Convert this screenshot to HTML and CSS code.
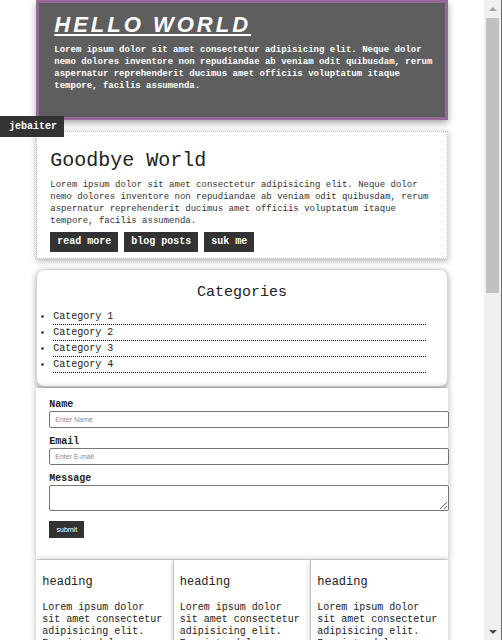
FILE: index.html
```html
<!DOCTYPE html>
<html>
<head>
<meta charset="utf-8">
<link rel="stylesheet" href="styles.css">
</head>
<body>
<div class="screen">
  <div class="viewport">
    <div class="tag">jebaiter</div>
    <div class="container">
      <header class="hero">
        <h1>HELLO WORLD</h1>
        <p>Lorem ipsum dolor sit amet consectetur adipisicing elit. Neque dolor nemo dolores inventore non repudiandae ab veniam odit quibusdam, rerum aspernatur reprehenderit ducimus amet officiis voluptatum itaque tempore, facilis assumenda.</p>
      </header>

      <section class="post">
        <h2>Goodbye World</h2>
        <p>Lorem ipsum dolor sit amet consectetur adipisicing elit. Neque dolor nemo dolores inventore non repudiandae ab veniam odit quibusdam, rerum aspernatur reprehenderit ducimus amet officiis voluptatum itaque tempore, facilis assumenda.</p>
        <div class="btns">
          <a class="btn">read more</a>
          <a class="btn">blog posts</a>
          <a class="btn">suk me</a>
        </div>
      </section>

      <section class="cats">
        <h3>Categories</h3>
        <ul>
          <li>Category 1</li>
          <li>Category 2</li>
          <li>Category 3</li>
          <li>Category 4</li>
        </ul>
      </section>

      <section class="form-box">
        <form>
          <label>Name</label>
          <input type="text" placeholder="Enter Name">
          <label>Email</label>
          <input type="text" placeholder="Enter E-mail">
          <label>Message</label>
          <textarea></textarea>
          <button type="button" class="submit">submit</button>
        </form>
      </section>

      <div class="cols">
        <div class="col">
          <h4>heading</h4>
          <p>Lorem ipsum dolor sit amet consectetur adipisicing elit. Eveniet, dolorum.</p>
        </div>
        <div class="col">
          <h4>heading</h4>
          <p>Lorem ipsum dolor sit amet consectetur adipisicing elit. Eveniet, dolorum.</p>
        </div>
        <div class="col">
          <h4>heading</h4>
          <p>Lorem ipsum dolor sit amet consectetur adipisicing elit. Eveniet, dolorum.</p>
        </div>
      </div>
    </div>
  </div>
  <div class="scrollbar">
    <div class="arrow up"></div>
    <div class="track"><div class="thumb"></div></div>
    <div class="arrow down"></div>
  </div>
  <div class="rim"></div>
</div>
</body>
</html>
```

FILE: styles.css
```css
html, body {
  margin: 0;
  padding: 0;
  height: 640px;
  overflow: hidden;
  background: #fff;
}

.screen {
  display: flex;
  width: 502px;
  height: 640px;
}

.viewport {
  position: relative;
  flex: 1;
  height: 640px;
  overflow: hidden;
  font-family: "Liberation Mono", "Courier New", monospace;
  color: #333;
}

.tag {
  position: absolute;
  left: 0;
  top: 116px;
  z-index: 5;
  background: #333;
  color: #fff;
  font-weight: bold;
  font-size: 10px;
  line-height: 21px;
  padding: 0 7px 0 9px;
}

.container {
  width: 85%;
  margin: 0 auto;
}

/* hero */
.hero {
  box-sizing: border-box;
  height: 120px;
  background: #5e5e5e;
  border: 3px solid #97699b;
  padding: 9px 8px 0 15px;
  box-shadow: 0 3px 7px rgba(0,0,0,0.35);
  color: #fff;
}

.hero h1 {
  margin: 0;
  font-family: "Liberation Sans", Arial, sans-serif;
  font-style: italic;
  font-weight: bold;
  font-size: 22px;
  line-height: 26px;
  letter-spacing: 3px;
  text-decoration: underline;
  text-decoration-thickness: 2px;
  text-underline-offset: 2px;
}

.hero p {
  margin: 6px 0 0;
  font-size: 9px;
  line-height: 12px;
  font-weight: bold;
}

/* post card */
.post {
  margin-top: 11px;
  border: 1px dotted #b9b9b9;
  padding: 16px 13px 6px 13px;
  box-shadow: 0 2px 6px rgba(0,0,0,0.3);
  background: #fff;
}

.post h2 {
  margin: 0;
  font-weight: normal;
  font-size: 20px;
  line-height: 26px;
  color: #222;
}

.post p {
  margin: 5px 0 0;
  font-size: 9px;
  line-height: 12px;
  color: #333;
}

.btns {
  display: flex;
  gap: 6px;
  margin-top: 5px;
}

.btn {
  display: block;
  background: #333;
  color: #fff;
  font-weight: bold;
  font-size: 10px;
  line-height: 20px;
  padding: 0 7px;
}

/* categories */
.cats {
  margin-top: 10px;
  border: 1px solid #d4d4d4;
  border-radius: 8px;
  box-shadow: 0 2px 6px rgba(0,0,0,0.35);
  padding: 13px 0 13px;
  background: #fff;
}

.cats h3 {
  margin: 0;
  text-align: center;
  font-weight: normal;
  font-size: 15px;
  line-height: 20px;
  color: #222;
}

.cats ul {
  margin: 6px 21px 0 16px;
  padding: 0;
  list-style: disc outside;
  color: #555;
}

.cats li {
  font-size: 10px;
  line-height: 15px;
  border-bottom: 1px dotted #111;
  color: #222;
}

.cats li::marker {
  color: #555;
}

/* form */
.form-box {
  margin-top: 1px;
  height: 171px;
  box-sizing: border-box;
  padding: 11px 13px 0;
  box-shadow: 0 0 7px rgba(0,0,0,0.3);
  background: #fff;
}

.form-box form {
  display: flex;
  flex-direction: column;
  align-items: flex-start;
}

.form-box label {
  font-size: 10px;
  line-height: 12px;
  font-weight: bold;
  color: #222;
}

.form-box input,
.form-box textarea {
  display: block;
  box-sizing: border-box;
  width: calc(100% + 14px);
  margin: 0 0 8px;
  padding: 0 5px;
  height: 17px;
  border: 1px solid #767676;
  border-radius: 2px;
  font-family: "Liberation Sans", Arial, sans-serif;
  font-size: 7px;
  background: #fff;
}

.form-box input::placeholder {
  color: #8a8a8a;
}

.form-box textarea {
  height: 26px;
  margin-bottom: 10px;
  resize: both;
}

.submit {
  background: #333;
  color: #fff;
  border: none;
  font-family: "Liberation Sans", Arial, sans-serif;
  font-size: 7px;
  width: 35px;
  height: 17px;
  padding: 0;
  border-radius: 0;
}

/* columns */
.cols {
  display: flex;
  gap: 1px;
  margin-top: 1px;
}

.col {
  flex: 1;
  padding: 12px 6px 0;
  box-shadow: 0 0 6px rgba(0,0,0,0.3);
  background: #fff;
  height: 200px;
}

.col h4 {
  margin: 0;
  font-weight: normal;
  font-size: 12px;
  line-height: 20px;
  color: #222;
}

.col p {
  margin: 10px 0 0;
  font-size: 10px;
  line-height: 12px;
  color: #222;
}

/* fake scrollbar */
.scrollbar {
  width: 17px;
  height: 640px;
  background: #f0f0f0;
  display: flex;
  flex-direction: column;
}

.arrow {
  height: 17px;
  display: flex;
  align-items: center;
  justify-content: center;
}

.arrow::before {
  content: "";
  width: 0;
  height: 0;
  border-left: 4px solid transparent;
  border-right: 4px solid transparent;
}

.arrow.up::before {
  border-bottom: 4px solid #a3a3a3;
}

.arrow.down::before {
  border-top: 4px solid #505050;
}

.track {
  flex: 1;
  padding: 1px 2px 0;
}

.thumb {
  height: 275px;
  background: #c1c1c1;
}

.rim {
  width: 1px;
  height: 640px;
  background: #6b6b6b;
}
```
